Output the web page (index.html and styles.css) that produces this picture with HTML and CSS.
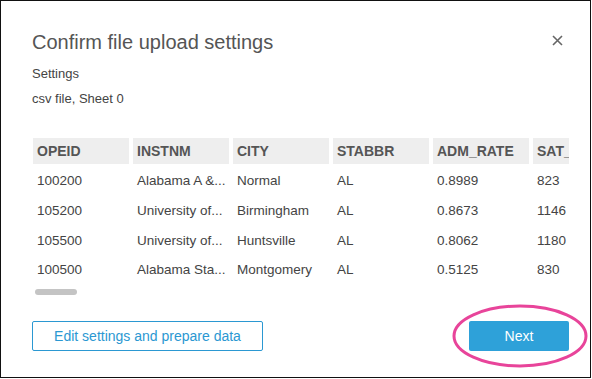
FILE: index.html
```html
<!DOCTYPE html>
<html lang="en">
<head>
    <meta charset="UTF-8">
    <meta name="viewport" content="width=device-width, initial-scale=1.0">
    <title>Confirm file upload settings</title>
    <link rel="stylesheet" href="styles.css">
</head>
<body>
    <div id="dialog">
        <div class="head">
            <h1>Confirm file upload settings</h1>
            <svg class="close" width="11" height="11" viewBox="0 0 11 11">
                <path d="M1 1 L10 10 M10 1 L1 10" stroke="#666" stroke-width="1.6"/>
            </svg>
        </div>
        <p class="label">Settings</p>
        <p class="label">csv file, Sheet 0</p>

        <div class="preview">
            <div class="row th">
                <span>OPEID</span><span>INSTNM</span><span>CITY</span><span>STABBR</span><span>ADM_RATE</span><span>SAT_AVG</span>
            </div>
            <div class="row">
                <span>100200</span><span>Alabama A &amp;...</span><span>Normal</span><span>AL</span><span>0.8989</span><span>823</span>
            </div>
            <div class="row">
                <span>105200</span><span>University of...</span><span>Birmingham</span><span>AL</span><span>0.8673</span><span>1146</span>
            </div>
            <div class="row">
                <span>105500</span><span>University of...</span><span>Huntsville</span><span>AL</span><span>0.8062</span><span>1180</span>
            </div>
            <div class="row">
                <span>100500</span><span>Alabama Sta...</span><span>Montgomery</span><span>AL</span><span>0.5125</span><span>830</span>
            </div>
        </div>
        <div class="thumb"></div>

        <div class="actions">
            <button class="secondary">Edit settings and prepare data</button>
            <div class="circled">
                <button class="primary">Next</button>
                <svg class="ring" width="140" height="66" viewBox="0 0 140 66">
                    <ellipse cx="68" cy="33" rx="66" ry="30" fill="none" stroke="#e8449a" stroke-width="3"/>
                </svg>
            </div>
        </div>
    </div>
</body>
</html>
```

FILE: styles.css
```css
* {
    box-sizing: border-box;
}

html, body {
    margin: 0;
    background-color: white;
}

#dialog {
    width: 591px;
    height: 378px;
    border: 1px solid #111;
    padding: 29px 22px 0 31px;
    font-family: "Liberation Sans", Arial, sans-serif;
    color: #444;
}

.head {
    display: flex;
    justify-content: space-between;
    align-items: flex-start;
}

h1 {
    margin: 0;
    font-size: 20px;
    line-height: 24px;
    font-weight: normal;
    color: #555;
}

.close {
    margin-top: 5px;
    margin-right: 5px;
}

.label {
    margin: 11px 0 0 0;
    font-size: 13px;
    line-height: 18px;
}
.label + .label {
    margin-top: 7px;
}

.preview {
    margin-top: 30px;
    margin-left: 1px;
    width: 536px;
    overflow: hidden;
}

.row {
    display: grid;
    grid-template-columns: repeat(6, 96px);
    column-gap: 4px;
    height: 29.7px;
    align-items: center;
    font-size: 13.5px;
}
.row > span {
    padding-left: 4px;
    white-space: nowrap;
    overflow: hidden;
}

.th {
    height: 26px;
    margin-bottom: 2px;
    font-size: 14px;
    font-weight: bold;
    color: #555;
}
.th > span {
    background-color: #eeeeee;
    height: 26px;
    line-height: 26px;
}

.thumb {
    margin: 4px 0 0 3px;
    width: 42px;
    height: 6px;
    border-radius: 3px;
    background-color: #c4c4c4;
}

.actions {
    display: flex;
    justify-content: space-between;
    align-items: center;
    margin-top: 26px;
}

button {
    font-family: "Liberation Sans", Arial, sans-serif;
    font-size: 14px;
    height: 30px;
    border-radius: 2px;
    cursor: pointer;
}

.secondary {
    width: 231px;
    background-color: white;
    color: #2b98d2;
    border: 1px solid #2b98d2;
}

.circled {
    position: relative;
    margin-right: -1px;
}

.primary {
    width: 100px;
    background-color: #2ea1d9;
    color: white;
    border: none;
}

.ring {
    position: absolute;
    left: -17px;
    top: -18px;
    pointer-events: none;
}
```
